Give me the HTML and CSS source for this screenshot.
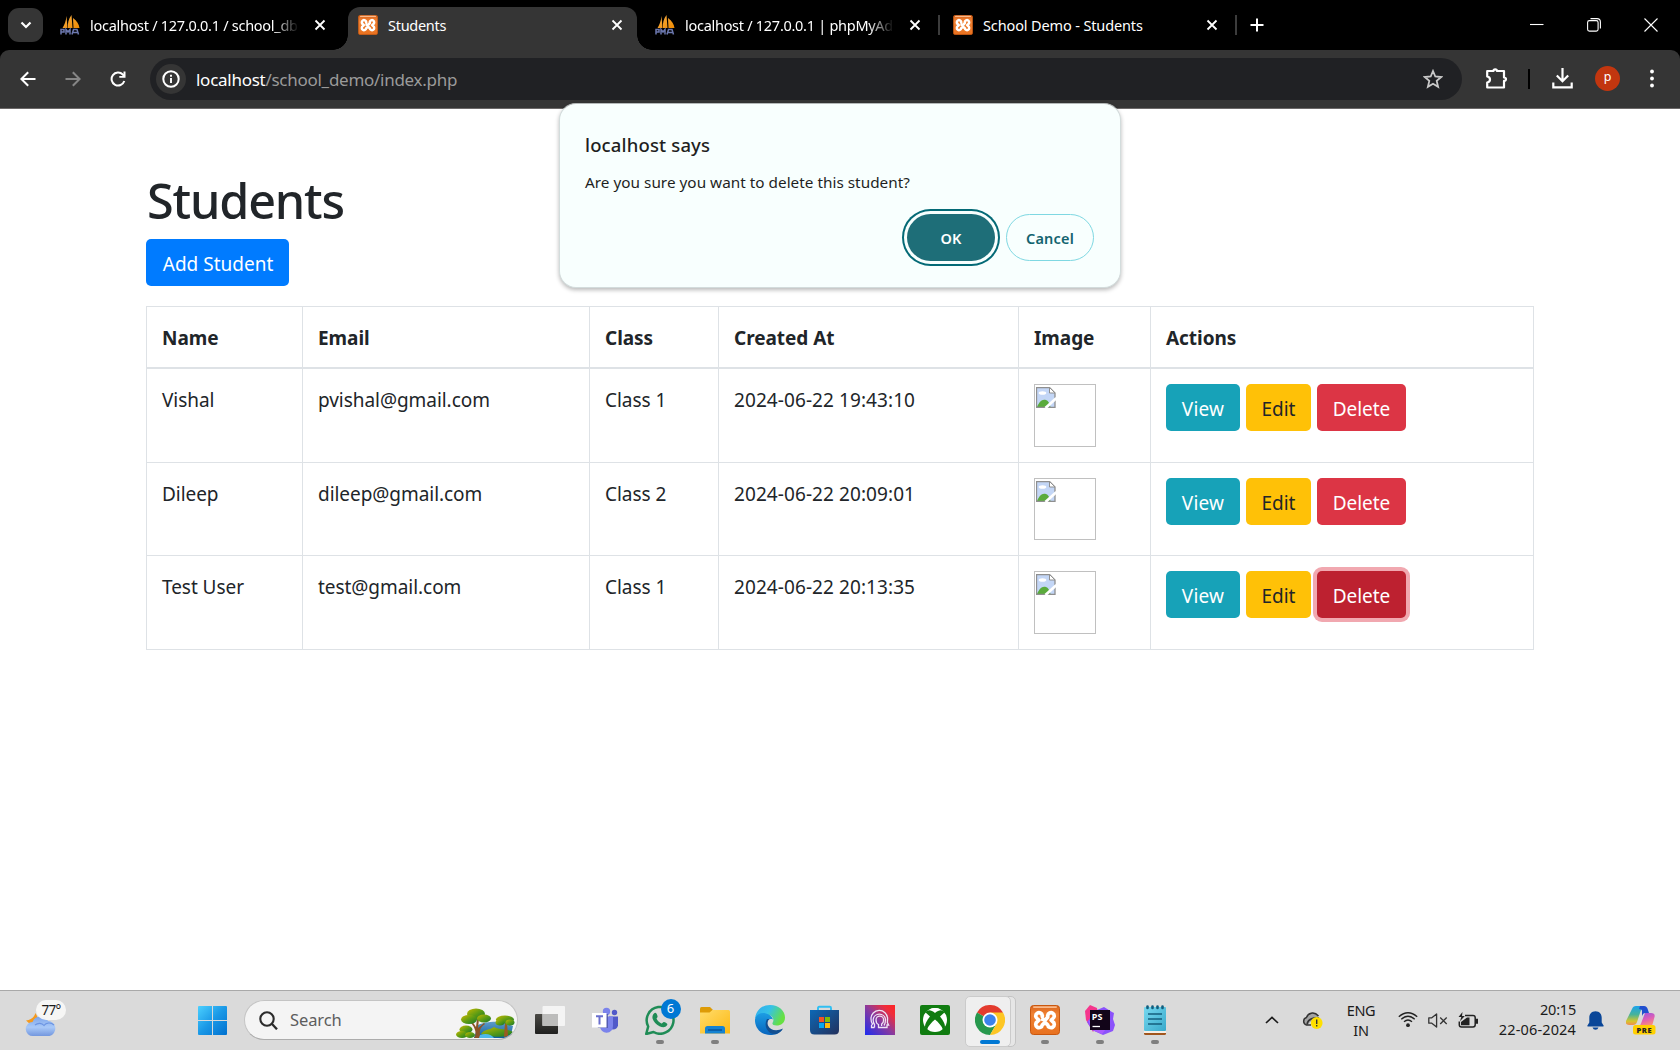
FILE: index.html
```html
<!DOCTYPE html>
<html lang="en">
<head>
<meta charset="utf-8">
<title>Students</title>
<link rel="stylesheet" href="styles.css">
</head>
<body>
<svg class="defs" aria-hidden="true">
  <defs>
    <linearGradient id="orange" x1="0" y1="0" x2="0" y2="1"><stop offset="0" stop-color="#d9641c"/><stop offset=".3" stop-color="#f08234"/><stop offset="1" stop-color="#e8711f"/></linearGradient>
    <linearGradient id="sail" x1="0" y1="0" x2="1" y2="1"><stop offset="0" stop-color="#f6b04a"/><stop offset="1" stop-color="#f08a00"/></linearGradient>
  </defs>
  <symbol id="xampp" viewBox="0 0 30 30">
    <rect x=".5" y=".5" width="29" height="29" rx="3" fill="url(#orange)" stroke="#c9570f"/>
    <rect x="3" y="1.2" width="24" height="1.8" rx=".9" fill="#f9b98a"/>
    <path d="M12.300 11.500V10.500a3.300 3.300 0 1 0-5 3.300l1.500 1.400-1.500 1.400a3.300 3.300 0 1 0 5 3.300l2.700-2.400 2.700 2.400a3.300 3.300 0 1 0 5-3.300l-1.500-1.400 1.500-1.400a3.300 3.300 0 1 0-5-3.300v1.700l-2 2.300h-3" fill="none" stroke="#fff" stroke-width="3.700" stroke-linejoin="round" stroke-linecap="round"/>
  </symbol>
  <symbol id="pma" viewBox="0 0 20 20">
    <path d="M6.500 1 7.500 13H2.500C4.500 10 6 6 6.500 1zM11.500 0c-3 4-4 8-3.500 13h4.500zM13 3c4 3 6 6 6.500 10h-6z" fill="url(#sail)"/>
    <path d="M1 19.500v-5h3v2.500H1M6 19.500v-5l2 2.500 2-2.500v5M12 19.500l1.500-5h3.500l1.500 5M12.500 17.500h5.500" fill="none" stroke="#6c78af" stroke-width="1.500"/>
  </symbol>
  <symbol id="close" viewBox="0 0 12 12"><path d="M1.500 1.500l9 9M10.500 1.500l-9 9" fill="none" stroke="#fff" stroke-width="1.800"/></symbol>
  <symbol id="broken" viewBox="0 0 20 21">
    <path d="M.5 20.500V.5h13l5.500 5.500v14.500z" fill="#c3d6f6"/>
    <path d="M1 20c2-5 5-8.500 9-7 2 .8 3.500 3 4.500 7z" fill="#5aab3c"/>
    <ellipse cx="6.500" cy="6" rx="3.800" ry="1.800" fill="#fff"/>
    <path d="M.5 20.500V.5h13l5.500 5.500v14.500z" fill="none" stroke="#8f8f8f" stroke-width="1.300"/>
    <path d="M13.500.5V6H19z" fill="#fff" stroke="#8f8f8f"/>
    <path d="M20.500 11 9.500 21" stroke="#fff" stroke-width="2.800"/>
  </symbol>
</svg>

<div class="window">
  <header class="tabstrip">
    <div class="tab-search"><svg width="12" height="8" viewBox="0 0 12 8"><path d="M1.500 1.500 6 6l4.500-4.500" fill="none" stroke="#fff" stroke-width="2.200"/></svg></div>
    <div class="tab tab-one"><svg class="favicon"><use href="#pma"/></svg><span class="tab-title fade">localhost / 127.0.0.1 / school_db</span><svg class="tab-close"><use href="#close"/></svg></div>
    <div class="tab tab-active"><svg class="favicon"><use href="#xampp"/></svg><span class="tab-title">Students</span><svg class="tab-close"><use href="#close"/></svg></div>
    <div class="tab tab-three"><svg class="favicon"><use href="#pma"/></svg><span class="tab-title fade">localhost / 127.0.0.1 | phpMyAd</span><svg class="tab-close"><use href="#close"/></svg></div>
    <div class="tab-sep"></div>
    <div class="tab tab-four"><svg class="favicon"><use href="#xampp"/></svg><span class="tab-title tab-title-wide">School Demo - Students</span><svg class="tab-close"><use href="#close"/></svg></div>
    <div class="tab-sep"></div>
    <svg class="new-tab" viewBox="0 0 14 14"><path d="M7 .5v13M.5 7h13" stroke="#fff" stroke-width="2"/></svg>
    <div class="window-controls">
      <svg width="14" height="14" viewBox="0 0 14 14"><path d="M0 6.500h13.500" stroke="#fff" stroke-width="1.100"/></svg>
      <svg width="14" height="14" viewBox="0 0 14 14"><rect x=".6" y="2.600" width="10.500" height="10.500" rx="1.800" fill="none" stroke="#fff" stroke-width="1.100"/><path d="M3.500.6H10c2 0 3.400 1.400 3.400 3.400v6.500" fill="none" stroke="#fff" stroke-width="1.100"/></svg>
      <svg width="14" height="14" viewBox="0 0 14 14"><path d="M.5.5l13 13M13.500.5l-13 13" stroke="#fff" stroke-width="1.100"/></svg>
    </div>
  </header>

  <div class="toolbar-wrap">
    <div class="toolbar">
      <svg class="nav-icon" viewBox="0 0 16 16"><path d="M15.500 8H2M8.200 1.200 1.400 8l6.800 6.800" fill="none" stroke="#fff" stroke-width="2"/></svg>
      <svg class="nav-icon" viewBox="0 0 16 16"><path d="M.5 8H14M7.800 1.200 14.600 8l-6.800 6.800" fill="none" stroke="#868686" stroke-width="2"/></svg>
      <svg class="nav-icon" viewBox="0 0 16 16"><path d="M14.300 10A6.500 6.500 0 1 1 12.800 3.500L14.500 5.500" fill="none" stroke="#fff" stroke-width="2"/><path d="M15.500.5v6.200H9.300V4.900h4.200V.5z" fill="#fff"/></svg>
      <div class="omnibox">
        <div class="site-info"><svg width="18" height="18" viewBox="0 0 18 18"><circle cx="9" cy="9" r="7.700" fill="none" stroke="#fff" stroke-width="2"/><path d="M9 8v5M9 4.700v2" stroke="#fff" stroke-width="1.900"/></svg></div>
        <div class="url"><span class="url-host">localhost</span>/school_demo/index.php</div>
        <svg class="star" viewBox="0 0 20 20"><path d="M10 2l2.300 5.500 5.900.5-4.500 3.900 1.400 5.900L10 14.700l-5.100 3.100 1.400-5.900L1.800 8l5.900-.5z" fill="none" stroke="#c9c9c9" stroke-width="1.800"/></svg>
      </div>
      <svg class="puzzle" viewBox="0 0 21 21"><path d="M1.200 3h6.300c0-1 .5-1.700 1.700-1.700S10.900 2 10.900 3H18v6.500c1.400 0 2 .6 2 1.700s-.6 1.700-2 1.700V19.500H1.200v-5c1.800-.3 2.800-1.300 2.800-3s-1-2.700-2.800-3z" fill="none" stroke="#fff" stroke-width="2.200" stroke-linejoin="round"/></svg>
      <div class="tool-sep"></div>
      <svg class="download" viewBox="0 0 21 21"><path d="M10.500 0v12.500M4.800 7.500l5.700 5.700 5.700-5.700M1.300 14.500v4.800h18.400v-4.800" fill="none" stroke="#fff" stroke-width="2.200"/></svg>
      <div class="avatar">p</div>
      <svg class="kebab" viewBox="0 0 4 19"><circle cx="2" cy="2.500" r="1.900" fill="#fff"/><circle cx="2" cy="9.500" r="1.900" fill="#fff"/><circle cx="2" cy="16.500" r="1.900" fill="#fff"/></svg>
    </div>
  </div>

  <main class="page">
    <h1 class="page-title">Students</h1>
    <a class="btn btn-primary">Add Student</a>
    <table class="students">
      <colgroup><col class="c-name"><col class="c-email"><col class="c-class"><col class="c-created"><col class="c-image"><col class="c-actions"></colgroup>
      <thead><tr><th>Name</th><th>Email</th><th>Class</th><th>Created At</th><th>Image</th><th>Actions</th></tr></thead>
      <tbody>
        <tr class="row-first"><td>Vishal</td><td>pvishal@gmail.com</td><td>Class 1</td><td class="date">2024-06-22 19:43:10</td>
          <td class="media"><div class="thumb"><svg class="broken"><use href="#broken"/></svg></div></td>
          <td class="media"><div class="actions"><a class="btn btn-info">View</a><a class="btn btn-warning">Edit</a><a class="btn btn-danger">Delete</a></div></td></tr>
        <tr class="row-second"><td>Dileep</td><td>dileep@gmail.com</td><td>Class 2</td><td class="date">2024-06-22 20:09:01</td>
          <td class="media"><div class="thumb"><svg class="broken"><use href="#broken"/></svg></div></td>
          <td class="media"><div class="actions"><a class="btn btn-info">View</a><a class="btn btn-warning">Edit</a><a class="btn btn-danger">Delete</a></div></td></tr>
        <tr class="row-third"><td>Test User</td><td>test@gmail.com</td><td>Class 1</td><td class="date">2024-06-22 20:13:35</td>
          <td class="media"><div class="thumb"><svg class="broken"><use href="#broken"/></svg></div></td>
          <td class="media"><div class="actions"><a class="btn btn-info">View</a><a class="btn btn-warning">Edit</a><a class="btn btn-danger is-focused">Delete</a></div></td></tr>
      </tbody>
    </table>
  </main>

  <div class="dialog" role="alertdialog">
    <div class="dialog-title">localhost says</div>
    <div class="dialog-text">Are you sure you want to delete this student?</div>
    <div class="dialog-buttons"><button class="dlg-btn dlg-ok">OK</button><button class="dlg-btn dlg-cancel">Cancel</button></div>
  </div>

  <footer class="taskbar">
    <div class="weather">
      <svg width="42" height="38" viewBox="0 0 42 38">
        <defs><linearGradient id="cloud" x1="0" y1="0" x2="0" y2="1"><stop offset="0" stop-color="#7ba4ea"/><stop offset=".55" stop-color="#a9c9f8"/><stop offset="1" stop-color="#7397de"/></linearGradient></defs>
        <path d="M2 19.500c5-.5 8-3 9.500-7.500l4 8-5 7z" fill="#f59a1d"/>
        <path d="M9 35a7 7 0 0 1-.5-14 8.500 8.500 0 0 1 15.500-1 7.600 7.600 0 0 1 1.500 15z" fill="url(#cloud)"/>
        <path d="M11 24c3-2.500 7-2 9 .5 2-3 7-3.500 10-.5" fill="none" stroke="#6b94e2" stroke-width="1.200"/>
      </svg>
      <span class="temp">77°</span>
    </div>
    <svg class="start" viewBox="0 0 29 29">
      <defs><linearGradient id="win" gradientUnits="userSpaceOnUse" x1="0" y1="0" x2="29" y2="29"><stop offset="0" stop-color="#4bd0ff"/><stop offset=".5" stop-color="#1a98e6"/><stop offset="1" stop-color="#0070cf"/></linearGradient></defs>
      <path d="M1 0h13v14H0V1q0-1 1-1zM15 0h13q1 0 1 1v13H15zM0 15h14v14H1q-1 0-1-1zM15 15h14v13q0 1-1 1H15z" fill="url(#win)"/>
    </svg>
    <div class="search">
      <svg class="search-icon" viewBox="0 0 19 19"><circle cx="8" cy="8" r="6.700" fill="none" stroke="#2b2b2b" stroke-width="2.100"/><path d="M12.800 12.800 18 18.300" stroke="#2b2b2b" stroke-width="2.300"/></svg>
      <span class="search-label">Search</span>
      <svg class="trees" viewBox="0 0 59 30">
        <defs><linearGradient id="leaf" x1="0" y1="0" x2="1" y2="1"><stop offset="0" stop-color="#c9b800"/><stop offset=".5" stop-color="#5f9d13"/><stop offset="1" stop-color="#15752b"/></linearGradient><linearGradient id="lake" x1="0" y1="0" x2="0" y2="1"><stop offset="0" stop-color="#5f9ccb"/><stop offset="1" stop-color="#0d5f9c"/></linearGradient></defs>
        <path d="M22 17c5-3 16-4 24-3l11 4-2 9-5 3H18z" fill="url(#lake)"/>
        <path d="M25 26c3-5 9-4 13-7 4 3 13 1 19 5-4 6-22 6-32 2z" fill="url(#leaf)"/>
        <path d="M18 30c3-3 2-10-4-16l2-1 4 6 1-8h2l-1 9 6-5 1 1c-6 4-6 9-4 14z" fill="#8b5427"/>
        <path d="M48 29l1-14h2l1 13z" fill="#9b5a22"/>
        <path d="M24 27c6-2 11-1 14 3H23z" fill="#4eb9e8"/>
        <g fill="url(#leaf)"><ellipse cx="20" cy="6" rx="9" ry="5.500"/><ellipse cx="13" cy="11.500" rx="8" ry="4.500"/><ellipse cx="28" cy="10.500" rx="7" ry="4"/><ellipse cx="49" cy="11.500" rx="9" ry="4"/><ellipse cx="44" cy="14.500" rx="4.500" ry="3"/><ellipse cx="54" cy="14.500" rx="4.500" ry="3"/><ellipse cx="10" cy="21.500" rx="6.500" ry="4"/><ellipse cx="6" cy="26.500" rx="6" ry="3.500"/><ellipse cx="14" cy="27" rx="5" ry="3"/></g>
      </svg>
    </div>
    <nav class="apps">
      <div class="app"><svg class="app-icon" viewBox="0 0 30 30">
        <defs><linearGradient id="tv" x1="0" y1="0" x2="0" y2="1"><stop offset="0" stop-color="#4a4945"/><stop offset="1" stop-color="#20201f"/></linearGradient></defs>
        <rect y="9" width="23" height="20" rx="1" fill="url(#tv)"/><rect x="7.500" y="1" width="22.500" height="20" rx="1" fill="#f4f4f4"/><rect x="7.500" y="9" width="15.500" height="12" fill="#bcbcbb"/></svg></div>
      <div class="app"><svg class="app-icon" viewBox="0 0 30 30">
        <circle cx="16.500" cy="6.500" r="3.700" fill="#7b83eb"/><circle cx="24.500" cy="7.500" r="2.700" fill="#5059c9"/>
        <path d="M19 11.500h9v9q-1 4-5 4-3 0-4-2z" fill="#5059c9"/><path d="M9 11.500h14v9.500a6.500 6.500 0 0 1-13 .5z" fill="#7b83eb"/>
        <path d="M4 9h14v14H8z" fill="#454d9f" fill-opacity=".75"/><rect x="2" y="8" width="14.500" height="14.500" fill="#fff"/><path d="M6 11.300h7M9.500 11.300v8.200" stroke="#6a6fce" stroke-width="2"/></svg></div>
      <div class="app"><svg class="app-icon" viewBox="0 0 30 30">
        <path d="M1.200 29l2-7.500A13.400 13.400 0 1 1 8.500 27z" fill="none" stroke="#1f8c56" stroke-width="2.500" stroke-linejoin="round"/>
        <path d="M9 8.500c1.500-1.500 2.500-.5 3.500 2.500.5 1.300-1.200 2-.9 2.800 1 2 2.600 3.700 4.800 4.600 1 .3 1.600-1.700 2.700-1.300 3 1.200 4 2 2.700 3.500-1.500 2-4.300 2-7.300.6-3.500-1.700-5.800-4.300-6.800-7.200-.6-2-.2-4 1.300-5.500z" fill="#1f8c56"/></svg><span class="badge">6</span><i class="running"></i></div>
      <div class="app"><svg class="app-icon" viewBox="0 0 30 30">
        <defs><linearGradient id="folder" x1="0" y1="0" x2="1" y2="1"><stop offset="0" stop-color="#ffdc6b"/><stop offset="1" stop-color="#fdb913"/></linearGradient></defs>
        <path d="M0 3.500Q0 2 1.500 2H10l2.500 2.500V11H0z" fill="#dd9b07"/><path d="M0 7.500h9.500l3-2.500H28.500q1.500 0 1.500 1.500v22H0z" fill="url(#folder)"/>
        <path d="M5 28.500v-5q0-2.500 2.500-2.500h15q2.500 0 2.500 2.500v5z" fill="#1583d2"/><path d="M8 25h14" stroke="#07559c" stroke-width="1.500"/></svg><i class="running"></i></div>
      <div class="app"><svg class="app-icon" viewBox="0 0 30 30">
        <defs><linearGradient id="edge1" x1="0" y1="0" x2="1" y2=".4"><stop offset="0" stop-color="#2eabee"/><stop offset=".5" stop-color="#35c1e8"/><stop offset="1" stop-color="#66e043"/></linearGradient><linearGradient id="edge2" x1="0" y1="0" x2="0" y2="1"><stop offset="0" stop-color="#1c9de4"/><stop offset="1" stop-color="#0764bd"/></linearGradient></defs>
        <path d="M0 14C1 5 7 0 15 0c9 0 15 6 15 12.500C30 18 26 20.500 21.500 20.500c-3 0-4.500-1-4-2.500 2.500-4-.5-8-5-8C6 10 1 12 0 14z" fill="url(#edge1)"/>
        <path d="M0 14.500C1 9.500 6 7 11 8.500c4 1 6 3 7 6C14 13 11 16 12 20c2 6 9 8 15.500 4C24 29 20 30 15 30 6 30-.5 23 0 14.500z" fill="url(#edge2)"/>
        <path d="M12 14c-4 7 1 16 9 15 3-.7 5.500-2.800 7-5.500-6 3-13 2-15-3-.8-2.500-.5-5 1.500-6.500z" fill="#124f92"/></svg></div>
      <div class="app"><svg class="app-icon" viewBox="0 0 30 30">
        <defs><linearGradient id="store" x1="0" y1="0" x2="1" y2="1"><stop offset="0" stop-color="#0c68b6"/><stop offset="1" stop-color="#23315d"/></linearGradient></defs>
        <path d="M8 7V3q0-1.200 1.200-1.200h10.600Q21 1.800 21 3v4" fill="none" stroke="#30bff2" stroke-width="1.900"/><path d="M0 5h29v20q0 4.500-4.500 4.500h-20Q0 29.500 0 25z" fill="url(#store)"/>
        <rect x="9" y="12" width="5" height="5" fill="#f35325"/><rect x="15" y="12" width="5" height="5" fill="#81bc06"/><rect x="9" y="18" width="5" height="5" fill="#05a6f0"/><rect x="15" y="18" width="5" height="5" fill="#ffba08"/></svg></div>
      <div class="app"><svg class="app-icon" viewBox="0 0 30 30">
        <defs><linearGradient id="head" x1="0" y1="1" x2="1" y2="0"><stop offset="0" stop-color="#1c2cf0"/><stop offset=".5" stop-color="#8d3a9b"/><stop offset=".8" stop-color="#ef2d3b"/><stop offset="1" stop-color="#ff2424"/></linearGradient></defs>
        <rect width="30" height="30" fill="url(#head)"/>
        <path d="M9.500 22.500H6.500v-2l1-1.500q-1.500-2-1.500-5a8.300 8.300 0 0 1 16.600-.5l-.2 4 1.200 2.500h-1.600v2.500H13.500v-3q-2.500-1-2.500-4.500a3.800 3.800 0 0 1 7.600 0q0 2.800-2 4v2M9.500 22.500v-3q-1.500-2-1.300-5a6.200 6.200 0 0 1 12.300 0q0 4-1.500 6" fill="none" stroke="#eee4f5" stroke-width="1.300"/></svg></div>
      <div class="app"><svg class="app-icon" viewBox="0 0 30 30">
        <rect width="30" height="30" rx="2" fill="#107c10"/><circle cx="15" cy="15" r="12" fill="#fff"/>
        <path d="M7 6c2-1.500 5-.5 8 2 3-2.500 6-3.500 8-2l2 1-5 4.500c4 5 6 9 4.500 12.500L23 25c-1-4-4.500-7.500-8-10.500C11.500 17.500 8 21 7 25l-1.500-1C4 20.500 6 16.500 10 11.500L5 7z" fill="#107c10"/><path d="M9 4.500q3 0 6 2 3-2 6-2-6-2.800-12 0z" fill="#fff"/></svg></div>
      <div class="app app-active"><svg class="app-icon" viewBox="0 0 30 30">
        <path d="M15 15 2 7.500A15 15 0 0 1 28 7.500z" fill="#e33b2e"/><path d="M2 7.500A15 15 0 0 0 15 30l6.500-11.300L15 15z" fill="#27984d"/><path d="M15 30A15 15 0 0 0 28 7.500H15l6.500 11.200z" fill="#fdc624"/>
        <circle cx="15" cy="15" r="7.500" fill="#fff"/><circle cx="15" cy="15" r="5.800" fill="#3b82ec"/></svg><i class="running"></i></div>
      <div class="app"><svg class="app-icon"><use href="#xampp"/></svg><i class="running"></i></div>
      <div class="app"><svg class="app-icon" viewBox="0 0 30 30">
        <path d="M5 0l7 3 2 14-6 10L1 15 0 6z" fill="#f5368d"/><path d="M12 5l7-3 8 5 2 1-1 6 2 6-2 6-10 4-11-5-5-8z" fill="#8b52fb"/><path d="M3 15l4 10 10 4 4-5z" fill="#a95bff"/>
        <rect x="5" y="5" width="20" height="20" fill="#120519"/><text class="ps-mark" x="6.800" y="14.800">PS</text><path d="M7.500 21.500h7.500" stroke="#fff" stroke-width="1.300"/></svg><i class="running"></i></div>
      <div class="app"><svg class="app-icon" viewBox="0 0 30 30">
        <defs><linearGradient id="note" x1="0" y1="0" x2="1" y2="1"><stop offset="0" stop-color="#77d9f0"/><stop offset="1" stop-color="#38a9cb"/></linearGradient></defs>
        <rect x="4" y="23" width="22" height="7" rx="1.500" fill="#a0551c"/><rect x="4" y="22" width="22" height="6" fill="#f4eee6"/><rect x="4" y="2" width="22" height="24" rx="1" fill="url(#note)"/>
        <path d="M8 9h14M8 14h14M8 19h14" stroke="#155f7d" stroke-width="1.700"/><path d="M7.500 1.500v1.500M12.500 1.500v1.500M17.500 1.500v1.500M22.500 1.500v1.500" stroke="#115d7d" stroke-width="2.600" stroke-linecap="round"/></svg><i class="running"></i></div>
    </nav>
    <div class="tray">
      <svg class="t-chevron" viewBox="0 0 14 8"><path d="M1 7l6-5.700L13 7" fill="none" stroke="#1b1b1b" stroke-width="1.700"/></svg>
      <svg class="t-cloud" viewBox="0 0 21 18"><path d="M6 14H4.500a3.700 3.700 0 0 1-.5-7.200Q5.500 2 10 1.500q4-.3 6.500 4.500L8 11z" fill="#a4a4a4"/><path d="M9 14H4.500a3.900 3.900 0 0 1 0-7.500C6 2 12 0 16.500 5M5 13C6 8 12 6 17 7" fill="none" stroke="#333" stroke-width="1.500"/><circle cx="14.700" cy="12" r="5.900" fill="#ffe000"/><path d="M14.700 8.500v4.500M14.700 14v1.600" stroke="#333" stroke-width="1.400"/></svg>
      <div class="t-lang">ENG<br>IN</div>
      <svg class="t-wifi" viewBox="0 0 20 16"><circle cx="10" cy="13.200" r="1.900" fill="#222"/><path d="M6 9.800q4-3.500 8 0M3.300 7.200q6.700-6 13.400 0M.8 4.700q9.200-8 18.400 0" fill="none" stroke="#222" stroke-width="1.300"/></svg>
      <svg class="t-speaker" viewBox="0 0 20 15"><path d="M.8 4.800v5.400h3L8.600 14V1L3.800 4.800z" fill="none" stroke="#333" stroke-width="1.300" stroke-linejoin="round"/><path d="M12.200 4.500l6.500 6.500M18.700 4.500l-6.500 6.500" stroke="#333" stroke-width="1.300"/></svg>
      <svg class="t-battery" viewBox="0 0 20 17"><path d="M7 3.500h8q2.200 0 2.200 2.200v7q0 2.200-2.200 2.200H3.500q-2.200 0-2.200-2.200V9.500M18 7.500h1.500v3.500H18z" fill="none" stroke="#222" stroke-width="1.500"/><path d="M3 13.300v-3.300l6-4.500h2.500v7.800zM4.500 0 .5 5h2.800L2 9.300 6.800 4H4z" fill="#222"/></svg>
      <div class="t-clock"><span class="t-time">20:15</span><br>22-06-2024</div>
      <svg class="t-bell" viewBox="0 0 17 19"><path d="M8.500.3c4 0 6.200 2.900 6.200 6.500v4.700l2 3.300q.2.700-.6.700H.9q-.8 0-.6-.7l2-3.300V6.800C2.300 3.200 4.500.3 8.500.3zM5.500 16.500h6q-.8 2.200-3 2.200t-3-2.200z" fill="#0a4698"/></svg>
      <svg class="t-copilot" viewBox="0 0 30 29">
        <defs><linearGradient id="cp1" x1="0" y1="0" x2="0" y2="1"><stop offset="0" stop-color="#1ba3ed"/><stop offset=".45" stop-color="#47b39a"/><stop offset=".8" stop-color="#d6c62c"/><stop offset="1" stop-color="#f38a50"/></linearGradient><linearGradient id="cp2" x1="0" y1="0" x2=".4" y2="1"><stop offset="0" stop-color="#8f51e6"/><stop offset=".6" stop-color="#e060b4"/><stop offset="1" stop-color="#f88e7b"/></linearGradient></defs>
        <path d="M6 3q1-3 4-3h8l-3 4-4 12q-1 3-4 3H3q-4 0-3-4z" fill="url(#cp1)"/><path d="M14 0h4q3 0 4 4l1 3h-4q-2 0-3 3V5q0-2-3-2z" fill="#214fcf"/><path d="M19 7h6q4.500 0 3.500 4l-2 7.500q-1 2-4 2H11q3 0 4-3z" fill="url(#cp2)"/>
        <rect x="7" y="19" width="22.500" height="9.500" rx="2.500" fill="#ffd000"/><text class="pre-mark" x="18.300" y="26.800">PRE</text></svg>
    </div>
  </footer>
</div>
</body>
</html>
```
FILE: styles.css
```css
* { box-sizing: border-box; }
body { margin: 0; font-family: "Noto Sans", "Open Sans", sans-serif; color: #212529; background: #fff; overflow: hidden; }
svg { display: block; flex: none; }
.defs { position: absolute; width: 0; height: 0; }
.window { position: relative; display: flex; flex-direction: column; width: 1680px; height: 1050px; }

/* tab strip */
.tabstrip { display: flex; align-items: center; height: 50px; padding-left: 8px; background: #000; flex: none; }
.tab-search { display: flex; align-items: center; justify-content: center; width: 35px; height: 34px; margin-right: 3px; border-radius: 11px; background: #353535; }
.tab { position: relative; display: flex; align-items: center; height: 50px; color: #fff; }
.tab-one { width: 302px; padding: 0 22px 0 14px; }
.tab-active { width: 289px; padding: 0 14px 7px 10px; margin-top: 7px; height: 43px; border-radius: 12px 12px 0 0; background: #353535; }
.tab-active::before, .tab-active::after { content: ""; position: absolute; bottom: 0; width: 15px; height: 15px; }
.tab-active::before { left: -15px; background: radial-gradient(circle at 0 0, transparent 14.500px, #353535 15px); }
.tab-active::after { right: -15px; background: radial-gradient(circle at 100% 0, transparent 14.500px, #353535 15px); }
.tab-three { width: 301px; padding: 0 17px 0 18px; }
.tab-four { width: 295px; padding: 0 17px 0 13px; }
.favicon { width: 20px; height: 20px; margin-right: 10px; }
.tab-title { flex: 1; min-width: 0; white-space: nowrap; font-size: 14.500px; letter-spacing: -0.280px; line-height: 22px; padding-bottom: 1px; margin-right: 14px; }
.tab-title-wide { letter-spacing: -0.130px; }
.fade { overflow: hidden; margin-right: 15px; -webkit-mask-image: linear-gradient(to right, #000 calc(100% - 26px), transparent); mask-image: linear-gradient(to right, #000 calc(100% - 26px), transparent); }
.tab-close { width: 12px; height: 12px; }
.tab-sep { width: 2px; height: 20px; background: #3c3c3c; }
.new-tab { width: 14px; height: 14px; margin-left: 13px; }
.window-controls { display: flex; gap: 43px; margin-left: auto; padding-right: 22px; }

/* toolbar */
.toolbar-wrap { height: 59px; background: #000; flex: none; }
.toolbar { display: flex; align-items: center; height: 59px; padding: 0 25px 1px 20px; background: #353535; border-bottom: 1px solid #6b6868; border-radius: 9px 9px 0 0; }
.nav-icon { width: 16px; height: 16px; margin-right: 29px; }
.omnibox { display: flex; align-items: center; width: 1312px; height: 42px; margin-left: -5px; padding: 0 19px 0 6px; border-radius: 21px; background: #202124; }
.site-info { display: flex; align-items: center; justify-content: center; width: 30px; height: 30px; border-radius: 50%; background: #353535; }
.url { flex: 1; margin-left: 10px; font-size: 17px; letter-spacing: -0.270px; line-height: 24px; padding-top: 2px; color: #9a9a9a; }
.url-host { color: #fff; }
.star { width: 20px; height: 20px; }
.puzzle { width: 21px; height: 21px; margin-left: 24px; }
.tool-sep { width: 2px; height: 20px; margin-left: 21px; background: #000; }
.download { width: 21px; height: 21px; margin-left: 22px; }
.avatar { width: 25px; height: 25px; margin-left: 22px; border-radius: 50%; background: #c2360f; color: #fff; font-size: 12.500px; line-height: 22px; text-align: center; }
.kebab { width: 4px; height: 19px; margin-left: 30px; }

/* page content */
.page { flex: 1; padding: 63px 146px 0; }
.page-title { margin: 0; height: 67px; font-size: 48.500px; font-weight: 550; letter-spacing: -1.150px; line-height: 56px; padding-left: 1px; }
.btn { display: inline-block; height: 47px; padding: 2px 0 0; border-radius: 5px; font-size: 19px; line-height: 47px; text-align: center; white-space: nowrap; color: #fff; }
.btn-primary { display: block; width: 143px; padding-left: 1px; background: #007bff; letter-spacing: 0; }
.btn-info { width: 74px; background: #17a2b8; letter-spacing: 0.200px; }
.btn-warning { width: 65px; background: #ffc107; color: #212529; }
.btn-danger { width: 89px; background: #dc3545; }
.is-focused { background: #bd2130; box-shadow: 0 0 0 4px #f1a8b0; }
.students { width: 1388px; margin-top: 20px; table-layout: fixed; border-spacing: 0; border-right: 1px solid #dee2e6; border-bottom: 1px solid #dee2e6; font-size: 19px; letter-spacing: -0.050px; line-height: 30px; }
.students th, .students td { padding: 16px 0 0 15px; border-left: 1px solid #dee2e6; border-top: 1px solid #dee2e6; vertical-align: top; text-align: left; font-weight: 370; }
.students th { height: 61px; font-weight: 700; letter-spacing: -0.050px; }
.students .media { padding-top: 15px; }
.students .date { letter-spacing: 0.080px; }
.c-name { width: 156px; }
.c-email { width: 287px; }
.c-class { width: 129px; }
.c-created { width: 300px; }
.c-image { width: 132px; }
.c-actions { width: 383px; }
.row-first td { height: 95px; border-top-width: 2px; }
.row-second td { height: 93px; }
.row-third td { height: 94px; }
.thumb { width: 62px; height: 63px; padding: 2px 1px; border: 1px solid #c0c0c0; }
.row-second .thumb { height: 62px; }
.broken { width: 20px; height: 21px; }
.actions { display: flex; gap: 6px; }

/* confirm dialog */
.dialog { position: absolute; left: 559px; top: 103px; width: 562px; height: 185px; padding: 27px 26px 0 25px; border: 1px solid #d3dcdc; border-top-color: #b4b9b9; border-radius: 17px; background: #f8fffe; box-shadow: 0 2px 4px rgba(0, 0, 0, 0.280); color: #1f1f1f; }
.dialog-title { font-size: 18.500px; font-weight: 500; letter-spacing: 0.150px; line-height: 28px; }
.dialog-text { margin-top: 11px; font-size: 15.300px; font-weight: 370; letter-spacing: 0.020px; line-height: 24px; }
.dialog-buttons { display: flex; justify-content: flex-end; gap: 11px; margin-top: 20px; }
.dlg-btn { width: 88px; height: 47px; padding: 1px 0 0; border-radius: 23.500px; font: 600 14.500px/44px "Noto Sans", "Open Sans", sans-serif; letter-spacing: 0.200px; }
.dlg-ok { border: 0; background: #1e6e78; color: #fff; box-shadow: 0 0 0 3px #f8fffe, 0 0 0 5px #046a76; }
.dlg-cancel { border: 1px solid #7fd8e2; background: #f8fffe; color: #13646f; }

/* taskbar */
.taskbar { display: flex; align-items: center; height: 60px; padding-bottom: 1px; border-top: 1px solid #a9a9a9; background: #dadada; flex: none; }
.weather { position: relative; width: 42px; height: 38px; margin-left: 24px; }
.temp { position: absolute; left: 12px; top: -1px; width: 30px; height: 20px; border-radius: 10px; background: rgba(248, 248, 246, 0.940); font-size: 13.500px; line-height: 20px; letter-spacing: -0.700px; text-align: center; color: #1b1b1b; }
.start { width: 29px; height: 29px; margin-left: 132px; }
.search { display: flex; align-items: center; width: 274px; height: 40px; margin-left: 17px; padding: 0 3px 0 14px; border: 1px solid #c4c4c4; border-bottom-color: #acacac; border-radius: 20px; background: #f4f4f4; overflow: hidden; }
.search-icon { width: 19px; height: 19px; }
.search-label { flex: 1; margin-left: 12px; font-size: 16.500px; letter-spacing: -0.100px; line-height: 24px; color: #5d5d5d; }
.trees { width: 59px; height: 30px; margin: 5px -1px 0 1px; }
.apps { display: flex; margin-left: 4px; }
.app { position: relative; display: flex; align-items: center; justify-content: center; width: 55px; height: 58px; }
.app-icon { position: relative; width: 30px; height: 30px; }
.running { position: absolute; left: 23.500px; bottom: 5px; width: 8px; height: 4px; border-radius: 2px; background: #7f7f7f; }
.badge { position: absolute; left: 28.500px; top: 8px; width: 20px; height: 20px; border-radius: 50%; background: #0078d4; color: #fff; font-size: 13px; line-height: 19px; text-align: center; }
.app-active::before { content: ""; position: absolute; left: 12px; top: 5px; width: 40px; height: 49px; border: 1px solid #c4c4c4; border-radius: 5px; background: #e6e6e6; }
.app-active::after { content: ""; position: absolute; left: 3px; top: 5px; width: 44px; height: 49px; border: 1px solid #cbcbcb; border-radius: 5px; background: #efefef; }
.app-active .app-icon { z-index: 1; }
.app-active .running { left: 17.500px; width: 20px; z-index: 1; background: #0078d4; }
.ps-mark { font: 700 9px "Noto Sans", sans-serif; fill: #fff; }
.pre-mark { font: 800 7.500px "Open Sans", sans-serif; letter-spacing: 0.500px; text-anchor: middle; fill: #222; }
.tray { display: flex; align-items: center; flex: 1; justify-content: flex-end; padding-right: 24px; font-size: 14.500px; line-height: 20px; color: #1b1b1b; }
.t-chevron { width: 14px; height: 8px; margin-right: 23px; }
.t-cloud { width: 21px; height: 18px; margin-right: 22px; }
.t-lang { width: 32px; text-align: center; letter-spacing: -0.300px; margin-right: 21px; padding-bottom: 1px; }
.t-wifi { width: 20px; height: 16px; margin-right: 10px; }
.t-speaker { width: 20px; height: 15px; margin-right: 10px; }
.t-battery { width: 20px; height: 17px; margin-right: 20px; }
.t-clock { width: 78px; text-align: right; letter-spacing: 0.150px; margin-right: 11px; padding-bottom: 3px; white-space: nowrap; }
.t-time { letter-spacing: -0.200px; }
.t-bell { width: 17px; height: 19px; margin-right: 22px; }
.t-copilot { width: 30px; height: 29px; }
```
